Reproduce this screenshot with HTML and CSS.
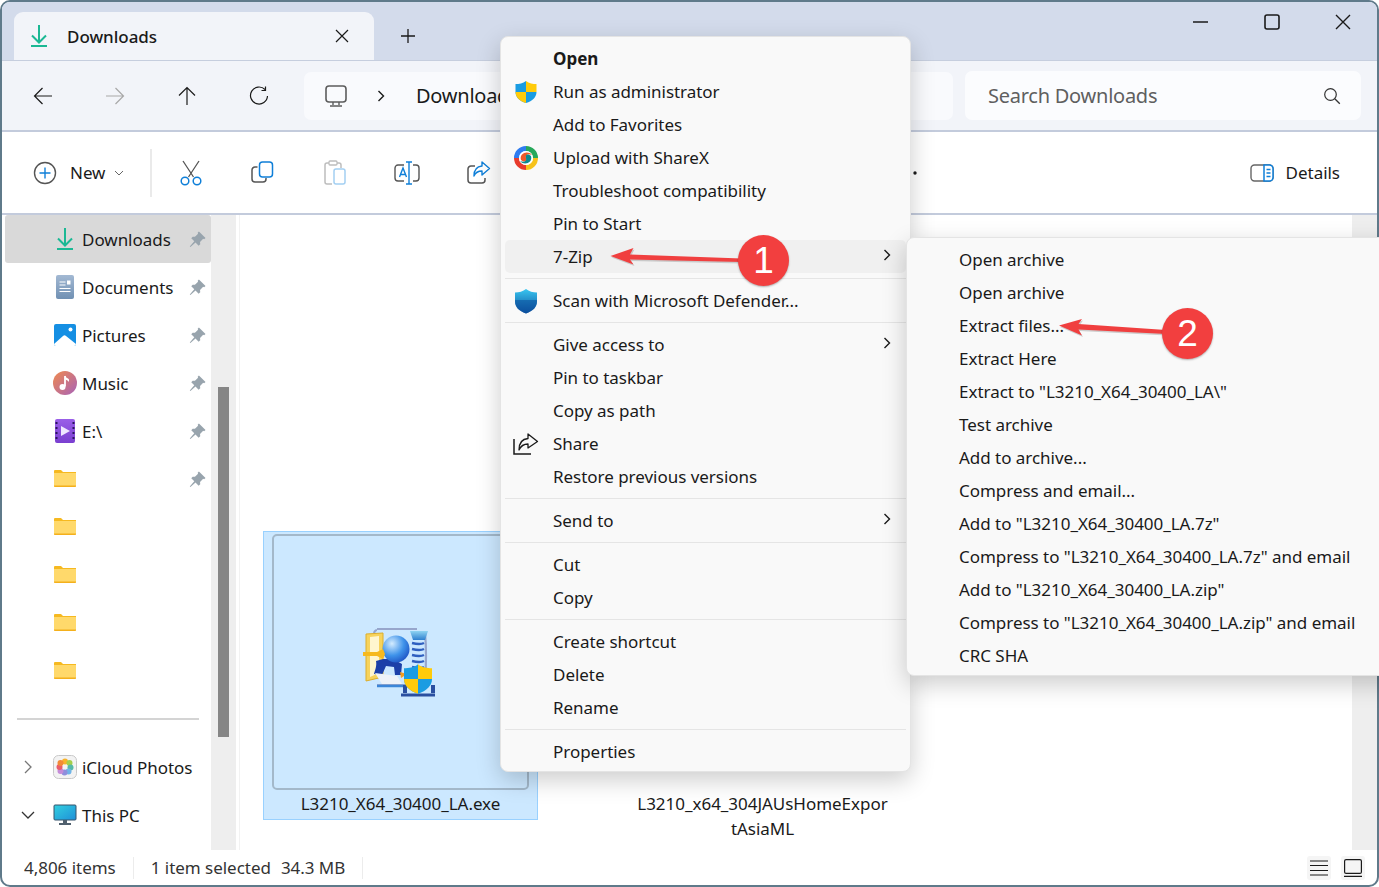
FILE: index.html
```html
<!DOCTYPE html>
<html lang="en">
<head>
<meta charset="utf-8">
<title>Downloads</title>
<link rel="stylesheet" href="styles.css">
</head>
<body>
<div class="page">
  <svg width="0" height="0" class="defs">
    <defs>
      <symbol id="dl" viewBox="0 0 16 22"><path d="M8 0v17M1 10.500l7 7 7-7M0 21h16" fill="none" stroke="#1bb894" stroke-width="2"/></symbol>
      <symbol id="pin" viewBox="0 0 18 18"><path d="M10.500 0.500l7 7-1.500 1.200-1-.4-3.300 3.300.2 2.400-1.700 1.500-3.300-3.300L1.500 17 0.800 16.300l4.800-5.400L2.400 7.700l1.500-1.700 2.400.2L9.600 2.900l-.4-1z" fill="#98a4ad"/></symbol>
      <symbol id="folder" viewBox="0 0 22 18"><path d="M0 2a1 1 0 0 1 1-1h6l2 2h13v4H0z" fill="#f6b920"/><path d="M0 4h22v13a1 1 0 0 1-1 1H1a1 1 0 0 1-1-1z" fill="#ffd96b"/><path d="M0 16.500h22V17a1 1 0 0 1-1 1H1a1 1 0 0 1-1-1z" fill="#f4b01c"/></symbol>
      <symbol id="chev" viewBox="0 0 10 14"><path d="M2.500 2l5 5-5 5" fill="none" stroke="#1a1a1a" stroke-width="1.400"/></symbol>
      <linearGradient id="docg" x1="0" y1="0" x2="0" y2="1"><stop offset="0" stop-color="#a3b9d3"/><stop offset="1" stop-color="#7090b3"/></linearGradient>
      <linearGradient id="musg" x1="0" y1="0" x2="1" y2="1"><stop offset="0" stop-color="#f08a4e"/><stop offset="1" stop-color="#a862b8"/></linearGradient>
      <linearGradient id="vidg" x1="0" y1="0" x2="0" y2="1"><stop offset="0" stop-color="#9a5fe8"/><stop offset="1" stop-color="#7a3fd0"/></linearGradient>
      <linearGradient id="defg" x1="0" y1="0" x2="0" y2="1"><stop offset="0" stop-color="#38c6f0"/><stop offset="1" stop-color="#0c4f9e"/></linearGradient>
      <linearGradient id="pcg" x1="0" y1="0" x2="1" y2="1"><stop offset="0" stop-color="#32d0e0"/><stop offset="1" stop-color="#1e8fd8"/></linearGradient>
      <linearGradient id="clampg" x1="0" y1="0" x2="0" y2="1"><stop offset="0" stop-color="#8fd4f2"/><stop offset="1" stop-color="#2f7fd0"/></linearGradient>
      <radialGradient id="ballg" cx=".35" cy=".3" r=".8"><stop offset="0" stop-color="#d4ecff"/><stop offset=".55" stop-color="#3f93ea"/><stop offset="1" stop-color="#1a4cc0"/></radialGradient>
      <symbol id="uac" viewBox="0 0 24 24"><path d="M12 1C9 3.500 5 4 1.500 4v8c0 5 4 9 10.500 11V12z" fill="#1a9ce2"/><path d="M12 1c3 2.500 7 3 10.500 3v8H12z" fill="#ffcb0a"/><path d="M1.500 12H12v11C5.500 21 1.500 17 1.500 12z" fill="#ffcb0a"/><path d="M22.500 12H12v11c6.500-2 10.500-6 10.500-11z" fill="#1a9ce2"/></symbol>
    </defs>
  </svg>

  <div class="window">
    <header class="tabbar">
      <div class="tab">
        <svg class="tab-ic" width="16" height="22"><use href="#dl"/></svg>
        <span class="tab-title">Downloads</span>
        <svg class="tab-x" width="14" height="14" viewBox="0 0 14 14"><path d="M1 1l12 12M13 1L1 13" stroke="#1a1a1a" stroke-width="1.200"/></svg>
      </div>
      <svg class="tab-plus" width="16" height="16" viewBox="0 0 16 16"><path d="M8 1v14M1 8h14" stroke="#1a1a1a" stroke-width="1.300"/></svg>
      <div class="winctl">
        <svg width="16" height="16" viewBox="0 0 16 16"><path d="M0 8h15" stroke="#1a1a1a" stroke-width="1.300"/></svg>
        <svg width="16" height="16" viewBox="0 0 16 16"><rect x="1" y="1" width="14" height="14" rx="2" fill="none" stroke="#1a1a1a" stroke-width="1.600"/></svg>
        <svg width="16" height="16" viewBox="0 0 16 16"><path d="M1 1l14 14M15 1L1 15" stroke="#1a1a1a" stroke-width="1.400"/></svg>
      </div>
    </header>

    <nav class="navbar">
      <div class="navbtns">
        <svg width="20" height="20" viewBox="0 0 20 20"><path d="M19 10H1.500M9.500 2l-8 8 8 8" fill="none" stroke="#1a1a1a" stroke-width="1.200"/></svg>
        <svg width="20" height="20" viewBox="0 0 20 20"><path d="M1 10h17.500M10.500 2l8 8-8 8" fill="none" stroke="#a8a8a8" stroke-width="1.200"/></svg>
        <svg width="20" height="20" viewBox="0 0 20 20"><path d="M10 19V1.500M2 9.500l8-8 8 8" fill="none" stroke="#1a1a1a" stroke-width="1.200"/></svg>
        <svg width="20" height="20" viewBox="0 0 20 20"><path d="M16 3.500A8.500 8.500 0 1 0 18.500 10M16.500 0.500v4h-4" fill="none" stroke="#1a1a1a" stroke-width="1.200"/></svg>
      </div>
      <div class="address">
        <svg width="22" height="22" viewBox="0 0 22 22"><rect x="1" y="1" width="20" height="16" rx="3" fill="none" stroke="#5c5c5c" stroke-width="1.600"/><path d="M8 17v3M14 17v3M5 21h12" stroke="#5c5c5c" stroke-width="1.400"/></svg>
        <svg class="addr-chev" width="10" height="14"><use href="#chev"/></svg>
        <span class="addr-text">Downloads</span>
      </div>
      <div class="search">
        <span>Search Downloads</span>
        <svg width="18" height="18" viewBox="0 0 18 18"><circle cx="7.500" cy="7.500" r="5.800" fill="none" stroke="#333" stroke-width="1.200"/><path d="M11.800 11.800l5 5" stroke="#333" stroke-width="1.300"/></svg>
      </div>
    </nav>

    <section class="toolbar">
      <div class="newbtn">
        <svg width="24" height="24" viewBox="0 0 24 24"><circle cx="12" cy="12" r="10.500" fill="none" stroke="#555" stroke-width="1.400"/><path d="M12 6.500v11M6.500 12h11" stroke="#0f7fd8" stroke-width="1.400"/></svg>
        <span>New</span>
        <svg width="10" height="6" viewBox="0 0 10 6"><path d="M1 1l4 4 4-4" fill="none" stroke="#666" stroke-width="1"/></svg>
      </div>
      <div class="tool-sep"></div>
      <div class="tool"><svg width="24" height="26" viewBox="0 0 24 26"><path d="M4 1l10.500 16M20 1L9.500 17" stroke="#555" stroke-width="1.300"/><circle cx="6" cy="21" r="3.800" fill="none" stroke="#0f7fd8" stroke-width="1.500"/><circle cx="18" cy="21" r="3.800" fill="none" stroke="#0f7fd8" stroke-width="1.500"/></svg></div>
      <div class="tool"><svg width="24" height="24" viewBox="0 0 24 24"><path d="M6.500 6H4a3 3 0 0 0-3 3v9a3 3 0 0 0 3 3h8a3 3 0 0 0 3-3v-1" fill="none" stroke="#555" stroke-width="1.500"/><rect x="8.500" y="1" width="13" height="15" rx="3" fill="none" stroke="#0f7fd8" stroke-width="1.500"/></svg></div>
      <div class="tool"><svg width="24" height="26" viewBox="0 0 24 26"><path d="M9 24H4a2 2 0 0 1-2-2V5a2 2 0 0 1 2-2h12a2 2 0 0 1 2 2v3" fill="none" stroke="#bdbdbd" stroke-width="1.500"/><rect x="6" y="1" width="8" height="4" rx="1" fill="#fff" stroke="#bdbdbd" stroke-width="1.300"/><rect x="11" y="9" width="11" height="15" rx="2" fill="none" stroke="#a3cff2" stroke-width="1.500"/></svg></div>
      <div class="tool"><svg width="26" height="24" viewBox="0 0 26 24"><path d="M10 4H4a3 3 0 0 0-3 3v10a3 3 0 0 0 3 3h6M19 4h3a3 3 0 0 1 3 3v10a3 3 0 0 1-3 3h-3" fill="none" stroke="#555" stroke-width="1.400"/><path d="M15 1v22M12 1h6M12 23h6M5.500 16L9 7l3.500 9M6.500 13.500h5" fill="none" stroke="#0f7fd8" stroke-width="1.400"/></svg></div>
      <div class="tool"><svg width="24" height="24" viewBox="0 0 24 24"><path d="M8 5H4a3 3 0 0 0-3 3v11a3 3 0 0 0 3 3h11a3 3 0 0 0 3-3v-2" fill="none" stroke="#555" stroke-width="1.500"/><path d="M15 1l7.500 6.500L15 14v-4c-4 0-6.500 1.500-8 5 0-6 3-9.500 8-10z" fill="none" stroke="#0f7fd8" stroke-width="1.400" stroke-linejoin="round"/></svg></div>
      <svg class="more" width="24" height="4" viewBox="0 0 24 4"><circle cx="3" cy="2" r="1.700" fill="#1a1a1a"/><circle cx="12" cy="2" r="1.700" fill="#1a1a1a"/><circle cx="21" cy="2" r="1.700" fill="#1a1a1a"/></svg>
      <div class="details">
        <svg width="24" height="18" viewBox="0 0 24 18"><rect x="1" y="1" width="22" height="16" rx="3.500" fill="none" stroke="#666" stroke-width="1.400"/><path d="M14 1h5.500A3.500 3.500 0 0 1 23 4.500v9a3.500 3.500 0 0 1-3.500 3.500H14z" fill="#fff" stroke="#0f7fd8" stroke-width="1.500"/><path d="M16.500 5.500h4M16.500 9h4M16.500 12.500h4" stroke="#0f7fd8" stroke-width="1.300"/></svg>
        <span>Details</span>
      </div>
    </section>

    <main class="main">
      <aside class="sidebar">
        <div class="side-row selected"><span class="side-ic"><svg width="16" height="22"><use href="#dl"/></svg></span><span>Downloads</span><svg class="pin" width="17" height="17"><use href="#pin"/></svg></div>
        <div class="side-row"><span class="side-ic"><svg width="18" height="24" viewBox="0 0 18 24"><rect width="18" height="24" rx="2" fill="url(#docg)"/><path d="M3.500 7h6M3.500 10h6M3.500 13.500h11M3.500 16.500h11" stroke="#fff" stroke-width="1.200"/><rect x="11" y="5.500" width="3.500" height="4" fill="#fff"/></svg></span><span>Documents</span><svg class="pin" width="17" height="17"><use href="#pin"/></svg></div>
        <div class="side-row"><span class="side-ic"><svg width="22" height="22" viewBox="0 0 22 22"><rect width="22" height="22" rx="2" fill="#158fe3"/><path d="M0 20l9-8a2 2 0 0 1 3 0l10 8a2 2 0 0 1-2 2H2a2 2 0 0 1-2-2z" fill="#fff"/><circle cx="16.500" cy="5.500" r="2" fill="#fff"/></svg></span><span>Pictures</span><svg class="pin" width="17" height="17"><use href="#pin"/></svg></div>
        <div class="side-row"><span class="side-ic"><svg width="24" height="24" viewBox="0 0 24 24"><circle cx="12" cy="12" r="12" fill="url(#musg)"/><path d="M12 5v10.500" stroke="#fff" stroke-width="1.800"/><path d="M12 4.500c1 2.500 3 2.500 4 4v2.500c-1-1.500-3-2-4-3z" fill="#fff"/><circle cx="9.500" cy="16" r="3" fill="#fff"/></svg></span><span>Music</span><svg class="pin" width="17" height="17"><use href="#pin"/></svg></div>
        <div class="side-row"><span class="side-ic"><svg width="20" height="24" viewBox="0 0 20 24"><rect width="20" height="24" rx="2" fill="url(#vidg)"/><path d="M6 7l9 5-9 5z" fill="#efe7ff"/><path d="M1.500 3v2M1.500 8v2M1.500 13v2M1.500 18v2M18.500 3v2M18.500 8v2M18.500 13v2M18.500 18v2" stroke="#2b1460" stroke-width="2"/></svg></span><span>E:\</span><svg class="pin" width="17" height="17"><use href="#pin"/></svg></div>
        <div class="side-row"><span class="side-ic"><svg class="folder-ic" width="22" height="18"><use href="#folder"/></svg></span><svg class="pin" width="17" height="17"><use href="#pin"/></svg></div>
        <div class="side-row"><span class="side-ic"><svg class="folder-ic" width="22" height="18"><use href="#folder"/></svg></span></div>
        <div class="side-row"><span class="side-ic"><svg class="folder-ic" width="22" height="18"><use href="#folder"/></svg></span></div>
        <div class="side-row"><span class="side-ic"><svg class="folder-ic" width="22" height="18"><use href="#folder"/></svg></span></div>
        <div class="side-row"><span class="side-ic"><svg class="folder-ic" width="22" height="18"><use href="#folder"/></svg></span></div>
        <div class="side-div"></div>
        <div class="side-row tree"><svg class="tree-chev" width="16" height="16" viewBox="0 0 16 16"><path d="M5 2l6 6-6 6" fill="none" stroke="#777" stroke-width="1.300"/></svg><span class="side-ic"><svg width="24" height="24" viewBox="0 0 24 24"><rect x=".5" y=".5" width="23" height="23" rx="5" fill="#f3f3f3" stroke="#c8c8c8"/><circle cx="12" cy="6.500" r="3" fill="#f7b32b"/><circle cx="16.500" cy="8" r="3" fill="#a5cf4b"/><circle cx="17.500" cy="12.500" r="3" fill="#55b9a8"/><circle cx="15.500" cy="16.500" r="3" fill="#6fb4e8"/><circle cx="11.500" cy="17.500" r="3" fill="#8f8fdc"/><circle cx="7.500" cy="16" r="3" fill="#c58bd8"/><circle cx="6.500" cy="12" r="3" fill="#ea5d6a"/><circle cx="7.500" cy="8" r="3" fill="#f28a36"/></svg></span><span>iCloud Photos</span></div>
        <div class="side-row tree"><svg class="tree-chev" width="16" height="16" viewBox="0 0 16 16"><path d="M2 5l6 6 6-6" fill="none" stroke="#333" stroke-width="1.300"/></svg><span class="side-ic"><svg width="24" height="22" viewBox="0 0 24 22"><rect x="1" y="1" width="22" height="15" rx="1" fill="url(#pcg)" stroke="#37526b"/><path d="M10 16h4v3h-4zM6 19h12v2H6z" fill="#50606e"/></svg></span><span>This PC</span></div>
      </aside>
      <div class="side-track"><div class="side-thumb"></div></div>
      <div class="content">
        <div class="tile picked">
          <div class="thumb">
            <svg width="76" height="74" viewBox="0 0 76 74">
              <path d="M14 5q-2 0-3 3M14 4h40M62 8q2 20 0 50M14 60h38" fill="none" stroke="#97a6cc" stroke-width="2.200"/>
              <path d="M14 61h34" stroke="#3c86d8" stroke-width="2.500"/>
              <path d="M47 6h18l-3 9H50z" fill="url(#clampg)"/>
              <path d="M49 18q8 2 12 0M49 24q8 2 12 0M49 30q8 2 12 0M49 36q8 2 12 0M49 42q8 2 12 0M49 48q8 2 12 0M49 54q8 2 12 0M49 60q8 2 12 0" fill="none" stroke="#2f5fc0" stroke-width="2.500"/>
              <path d="M42 60v8M70 60v8" stroke="#2a4fa0" stroke-width="4"/>
              <path d="M38 70h34" stroke="#2a4fa0" stroke-width="3"/>
              <path d="M3 9l17-1v44L3 56z" fill="#f7d35c" stroke="#dcae2c"/>
              <path d="M7 12l9-1v37l-9 4z" fill="#fff6cf"/>
              <path d="M13 36c1 5 -1 9 -2 13l8 1 4-9 8 1 1 8h6l1-11-9-5H20z" fill="#1c3fa8"/>
              <path d="M12 48l22 3 5 8-20 0z" fill="#eef2f8"/>
              <path d="M37 47l7 2-6 4z" fill="#f39c1e"/>
              <circle cx="33" cy="24" r="13.500" fill="url(#ballg)"/>
              <path d="M0 27h14l6-3 2 5-2 5-6-3H0z" fill="#f6b91e"/>
              <use href="#uac" x="39" y="38" width="32" height="32"/>
            </svg>
          </div>
          <div class="tile-name">L3210_X64_30400_LA.exe</div>
        </div>
        <div class="tile">
          <div class="thumb blank"></div>
          <div class="tile-name two">L3210_x64_304JAUsHomeExpor<br>tAsiaML</div>
        </div>
      </div>
      <div class="main-track"></div>
    </main>

    <footer class="status">
      <span>4,806 items</span>
      <i class="stat-sep"></i>
      <span>1 item selected</span>
      <span class="stat-size">34.3 MB</span>
      <i class="stat-sep"></i>
      <div class="views">
        <span class="viewbtn"><svg width="18" height="16" viewBox="0 0 18 16"><path d="M0 1h18M0 5.500h18M0 10.500h18M0 15h18" stroke="#1a1a1a" stroke-width="1.200"/></svg></span>
        <span class="viewbtn"><svg width="18" height="18" viewBox="0 0 18 18"><rect x=".6" y=".6" width="16.800" height="13.800" rx="1.500" fill="none" stroke="#1a1a1a" stroke-width="1.200"/><path d="M0 17.400h18" stroke="#1a1a1a" stroke-width="1.200"/></svg></span>
      </div>
    </footer>
  </div>

  <div class="menu main-menu">
    <div class="mrow strong"><span class="mi"></span>Open</div>
    <div class="mrow"><span class="mi"><svg width="24" height="24"><use href="#uac"/></svg></span>Run as administrator</div>
    <div class="mrow"><span class="mi"></span>Add to Favorites</div>
    <div class="mrow"><span class="mi"><svg width="24" height="24" viewBox="0 0 24 24"><path d="M12 2.500A9.500 9.500 0 0 1 21.500 12" fill="none" stroke="#27a85a" stroke-width="5"/><path d="M21.500 12A9.500 9.500 0 0 1 12 21.500" fill="none" stroke="#f6c21a" stroke-width="5"/><path d="M12 21.500A9.500 9.500 0 0 1 2.500 12" fill="none" stroke="#e83b2c" stroke-width="5"/><path d="M2.500 12A9.500 9.500 0 0 1 12 2.500" fill="none" stroke="#2f7cf0" stroke-width="5"/><circle cx="12" cy="12" r="7" fill="#fff"/><path d="M7 14c-2-7 7-10 11-5-4-2-7 0-6 3 1 3-1 5-5 2z" fill="#f0592a"/><path d="M17 10c2 7-7 10-11 5 4 2 7 0 6-3-1-3 1-5 5-2z" fill="#0b8a8f"/></svg></span>Upload with ShareX</div>
    <div class="mrow"><span class="mi"></span>Troubleshoot compatibility</div>
    <div class="mrow"><span class="mi"></span>Pin to Start</div>
    <div class="mrow hover"><span class="mi"></span>7-Zip<svg class="marrow" width="10" height="14"><use href="#chev"/></svg></div>
    <div class="msep"></div>
    <div class="mrow"><span class="mi"><svg width="24" height="26" viewBox="0 0 24 26"><path d="M12 1C9 3.500 5 4.500 1 4.500v9C1 19 5 23 12 25.500 19 23 23 19 23 13.500v-9C19 4.500 15 3.500 12 1z" fill="url(#defg)"/><path d="M12 1v24.500C5 23 1 19 1 13.500V12h22v1.500C23 19 19 23 12 25.500z" fill="#0b4f9c" opacity=".55"/></svg></span>Scan with Microsoft Defender...</div>
    <div class="msep"></div>
    <div class="mrow"><span class="mi"></span>Give access to<svg class="marrow" width="10" height="14"><use href="#chev"/></svg></div>
    <div class="mrow"><span class="mi"></span>Pin to taskbar</div>
    <div class="mrow"><span class="mi"></span>Copy as path</div>
    <div class="mrow"><span class="mi"><svg width="26" height="22" viewBox="0 0 26 22"><path d="M1 6v15h17" fill="none" stroke="#1a1a1a" stroke-width="1.500"/><path d="M15 1l9.500 7.500L15 15v-4c-4 0-7 1.500-9 6 0-7 3-11 9-11.500z" fill="none" stroke="#1a1a1a" stroke-width="1.300" stroke-linejoin="round"/></svg></span>Share</div>
    <div class="mrow"><span class="mi"></span>Restore previous versions</div>
    <div class="msep"></div>
    <div class="mrow"><span class="mi"></span>Send to<svg class="marrow" width="10" height="14"><use href="#chev"/></svg></div>
    <div class="msep"></div>
    <div class="mrow"><span class="mi"></span>Cut</div>
    <div class="mrow"><span class="mi"></span>Copy</div>
    <div class="msep"></div>
    <div class="mrow"><span class="mi"></span>Create shortcut</div>
    <div class="mrow"><span class="mi"></span>Delete</div>
    <div class="mrow"><span class="mi"></span>Rename</div>
    <div class="msep"></div>
    <div class="mrow"><span class="mi"></span>Properties</div>
  </div>

  <div class="menu sub-menu">
    <div class="mrow">Open archive</div>
    <div class="mrow">Open archive</div>
    <div class="mrow">Extract files...</div>
    <div class="mrow">Extract Here</div>
    <div class="mrow">Extract to "L3210_X64_30400_LA\"</div>
    <div class="mrow">Test archive</div>
    <div class="mrow">Add to archive...</div>
    <div class="mrow">Compress and email...</div>
    <div class="mrow">Add to "L3210_X64_30400_LA.7z"</div>
    <div class="mrow">Compress to "L3210_X64_30400_LA.7z" and email</div>
    <div class="mrow">Add to "L3210_X64_30400_LA.zip"</div>
    <div class="mrow">Compress to "L3210_X64_30400_LA.zip" and email</div>
    <div class="mrow">CRC SHA</div>
  </div>

  <svg class="arrows" width="1379" height="887" viewBox="0 0 1379 887">
    <path d="M610.500 256L633.500 248 630 254.500 742 258.500V262L630 259.500 633.500 264.500z" fill="#999" opacity=".45" transform="translate(1 1.500)"/>
    <path d="M610.500 256L633.500 248 630 254.500 742 258.500V262L630 259.500 633.500 264.500z" fill="#f03f3f"/>
    <path d="M1059 325.500L1082 319 1078.500 324 1166 330V334L1078.500 329.500 1082 335.500z" fill="#999" opacity=".45" transform="translate(1 1.500)"/>
    <path d="M1059 325.500L1082 319 1078.500 324 1166 330V334L1078.500 329.500 1082 335.500z" fill="#f03f3f"/>
  </svg>
  <div class="badge badge-one">1</div>
  <div class="badge badge-two">2</div>
</div>
</body>
</html>
```

FILE: styles.css
```css
* { box-sizing: border-box; }
html, body { margin: 0; padding: 0; }
body {
  width: 1379px;
  height: 887px;
  overflow: hidden;
  background: #fff;
  font-family: "Noto Sans", "Open Sans", "Liberation Sans", sans-serif;
  font-size: 17px;
  letter-spacing: -0.03px;
  color: #1a1a1a;
}
svg { display: block; flex: none; }
.defs { position: absolute; }
.page { position: relative; width: 1379px; height: 887px; overflow: hidden; }

.window {
  width: 1379px;
  height: 887px;
  border: 2px solid #5f7a8a;
  border-radius: 10px;
  overflow: hidden;
  background: #fff;
  display: flex;
  flex-direction: column;
}

/* tabs */
.tabbar {
  height: 58px;
  flex: none;
  background: #d3dbeb;
  display: flex;
  align-items: flex-start;
  padding: 10px 0 0 12px;
}
.tab {
  width: 360px;
  height: 48px;
  background: #f2f4f9;
  border-radius: 9px 9px 0 0;
  display: flex;
  align-items: center;
  padding: 0 25px 0 17px;
}
.tab-title { margin-left: 20px; font-weight: 500; flex: 1; }
.tab-plus { margin: 16px 0 0 26px; }
.winctl {
  margin-left: auto;
  display: flex;
  gap: 55px;
  padding: 2px 26px 0 0;
}

/* navigation */
.navbar {
  height: 72px;
  flex: none;
  background: #f2f4f9;
  border-top: 1px solid #c6cede;
  border-bottom: 2px solid #c3cbdc;
  display: flex;
  align-items: center;
}
.navbtns { display: flex; gap: 52px; padding-left: 31px; width: 302px; }
.address {
  width: 649px;
  height: 48px;
  background: #f9fafd;
  border-radius: 7px;
  display: flex;
  align-items: center;
  padding-left: 21px;
  font-size: 20px;
  letter-spacing: -0.25px;
}
.addr-chev { margin-left: 29px; }
.addr-text { margin-left: 30px; }
.search {
  width: 396px;
  height: 49px;
  margin-left: 12px;
  background: #fbfcfe;
  border-radius: 7px;
  display: flex;
  align-items: center;
  justify-content: space-between;
  padding: 0 20px 0 23px;
  font-size: 20px;
  letter-spacing: -0.25px;
  color: #5f5f5f;
}

/* commands */
.toolbar {
  height: 83px;
  flex: none;
  background: #fff;
  border-bottom: 2px solid #c3cbdc;
  display: flex;
  align-items: center;
  padding-left: 31px;
}
.newbtn { display: flex; align-items: center; }
.newbtn span { margin: 0 9px 0 13px; }
.tool-sep { width: 2px; height: 48px; margin: 0 3px 0 26px; background: #eaeaea; }
.tool { width: 72px; display: flex; justify-content: center; }
.more { margin-left: 379px; }
.details { margin-left: auto; display: flex; align-items: center; gap: 12px; padding-right: 37px; }

/* body */
.main { flex: 1; min-height: 0; display: flex; }
.sidebar { width: 209px; flex: none; overflow: hidden; }
.side-row {
  height: 48px;
  margin-left: 3px;
  padding: 0 5px 0 48px;
  display: flex;
  align-items: center;
  border-radius: 3px;
}
.side-row.selected { background: #d9d9d9; }
.side-ic { width: 24px; height: 24px; flex: none; display: flex; align-items: center; justify-content: center; margin-right: 5px; }
.folder-ic { margin-bottom: 2px; }
.pin { margin-left: auto; }
.side-div { height: 2px; width: 182px; margin: 23px 0 23px 15px; background: #d4d4d4; }
.side-row.tree { padding-left: 15px; }
.tree-chev { margin-right: 17px; }
.side-track { width: 25px; flex: none; background: #eeeeee; padding: 172px 7px 0; }
.side-thumb { height: 350px; background: #868686; }
.content {
  flex: 1;
  min-width: 0;
  margin-left: 3px;
  border-left: 1px solid #f2f2f2;
  padding: 316px 0 0 23px;
  display: flex;
  gap: 87px;
}
.tile { width: 275px; height: 289px; border: 1px solid transparent; display: flex; flex-direction: column; flex: none; }
.tile.picked { background: #cce8ff; border-color: #99d1ff; }
.thumb {
  height: 256px;
  flex: none;
  margin: 2px 8px 0;
  border: 2px solid #a3b8ca;
  border-radius: 5px;
  display: flex;
  align-items: center;
  justify-content: center;
}
.thumb.blank { border-color: transparent; }
.tile-name { text-align: center; margin-top: 1px; line-height: 25px; white-space: nowrap; }
.main-track { width: 25px; flex: none; background: #eeeeee; }

/* status */
.status {
  height: 35px;
  flex: none;
  display: flex;
  align-items: center;
  padding: 0 12px 0 22px;
  color: #333;
}
.stat-sep { width: 1px; height: 22px; margin: 0 17px; background: #ececec; }
.stat-size { margin-left: 10px; }
.views { margin-left: auto; display: flex; gap: 10px; }
.viewbtn { width: 24px; height: 24px; background: #f5f5f5; border-radius: 3px; display: flex; align-items: center; justify-content: center; }

/* context menus */
.menu {
  position: absolute;
  background: #f9f9f9;
  border: 1px solid #e4e4e4;
  border-radius: 8px;
  box-shadow: 0 8px 24px rgba(0, 0, 0, 0.2);
  padding: 5px 4px;
}
.main-menu { left: 500px; top: 36px; width: 411px; height: 736px; }
.sub-menu { left: 906px; top: 237px; width: 500px; height: 439px; }
.mrow {
  height: 33px;
  display: flex;
  align-items: center;
  border-radius: 5px;
  padding: 0 14px 0 9px;
  white-space: nowrap;
}
.sub-menu .mrow { padding-left: 48px; }
.mrow.hover { background: #f0f0f0; }
.mrow.strong { font-weight: 700; }
.mi { width: 24px; height: 24px; margin-right: 15px; flex: none; display: flex; align-items: center; justify-content: center; }
.marrow { margin-left: auto; margin-top: -4px; }
.msep { height: 1px; margin: 5px 0; background: #e5e5e5; }

/* annotations */
.arrows { position: absolute; left: 0; top: 0; pointer-events: none; }
.badge {
  position: absolute;
  width: 51px;
  height: 51px;
  border-radius: 50%;
  background: #f23f3f;
  box-shadow: 0 1px 2px rgba(0, 0, 0, 0.3);
  color: #fff;
  font-family: "Liberation Sans", sans-serif;
  font-size: 37px;
  letter-spacing: 0;
  display: flex;
  align-items: center;
  justify-content: center;
}
.badge-one { left: 738px; top: 235px; }
.badge-two { left: 1162px; top: 308px; }
```
